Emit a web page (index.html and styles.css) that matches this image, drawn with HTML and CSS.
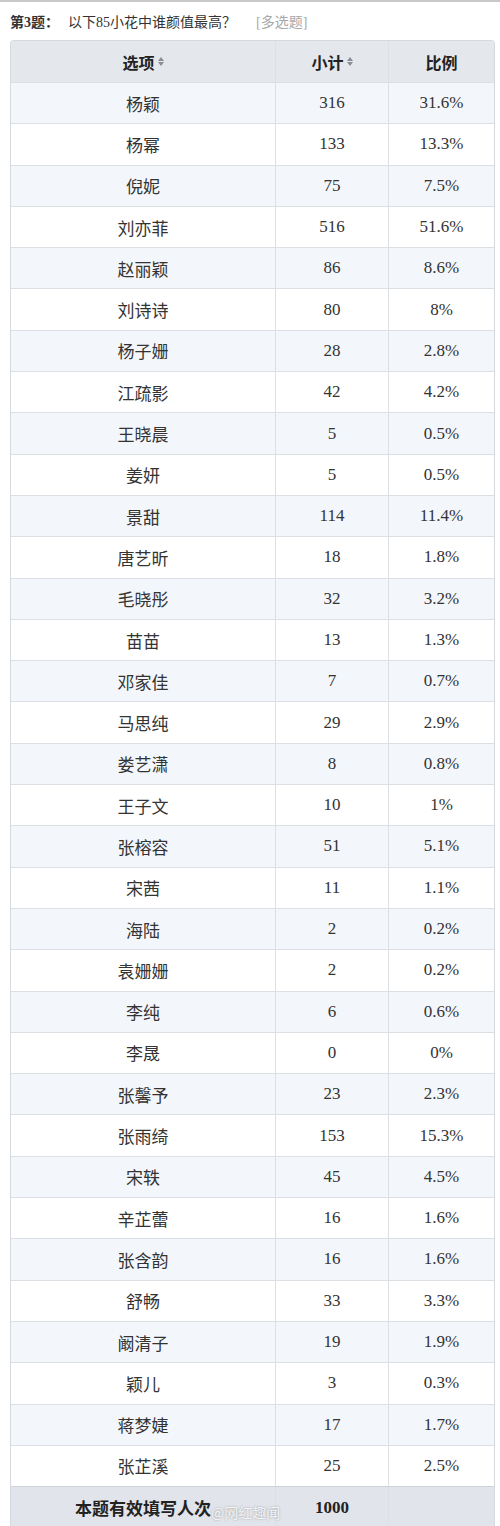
FILE: index.html
```html
<!DOCTYPE html>
<html lang="zh">
<head>
<meta charset="utf-8">
<link rel="stylesheet" href="styles.css">
</head>
<body>
<div class="topline"></div>
<div class="title"><span class="qno">第3题：</span><span class="qtext">以下85小花中谁颜值最高？</span><span class="qtype">[多选题]</span></div>
<div class="tbl">
  <div class="row head">
    <div class="c">选项<span class="sort"><i class="up"></i><i class="dn"></i></span></div>
    <div class="c">小计<span class="sort"><i class="up"></i><i class="dn"></i></span></div>
    <div class="c">比例</div>
  </div>
  <div class="row odd"><div class="c">杨颖</div><div class="c">316</div><div class="c">31.6%</div></div>
  <div class="row"><div class="c">杨幂</div><div class="c">133</div><div class="c">13.3%</div></div>
  <div class="row odd"><div class="c">倪妮</div><div class="c">75</div><div class="c">7.5%</div></div>
  <div class="row"><div class="c">刘亦菲</div><div class="c">516</div><div class="c">51.6%</div></div>
  <div class="row odd"><div class="c">赵丽颖</div><div class="c">86</div><div class="c">8.6%</div></div>
  <div class="row"><div class="c">刘诗诗</div><div class="c">80</div><div class="c">8%</div></div>
  <div class="row odd"><div class="c">杨子姗</div><div class="c">28</div><div class="c">2.8%</div></div>
  <div class="row"><div class="c">江疏影</div><div class="c">42</div><div class="c">4.2%</div></div>
  <div class="row odd"><div class="c">王晓晨</div><div class="c">5</div><div class="c">0.5%</div></div>
  <div class="row"><div class="c">姜妍</div><div class="c">5</div><div class="c">0.5%</div></div>
  <div class="row odd"><div class="c">景甜</div><div class="c">114</div><div class="c">11.4%</div></div>
  <div class="row"><div class="c">唐艺昕</div><div class="c">18</div><div class="c">1.8%</div></div>
  <div class="row odd"><div class="c">毛晓彤</div><div class="c">32</div><div class="c">3.2%</div></div>
  <div class="row"><div class="c">苗苗</div><div class="c">13</div><div class="c">1.3%</div></div>
  <div class="row odd"><div class="c">邓家佳</div><div class="c">7</div><div class="c">0.7%</div></div>
  <div class="row"><div class="c">马思纯</div><div class="c">29</div><div class="c">2.9%</div></div>
  <div class="row odd"><div class="c">娄艺潇</div><div class="c">8</div><div class="c">0.8%</div></div>
  <div class="row"><div class="c">王子文</div><div class="c">10</div><div class="c">1%</div></div>
  <div class="row odd"><div class="c">张榕容</div><div class="c">51</div><div class="c">5.1%</div></div>
  <div class="row"><div class="c">宋茜</div><div class="c">11</div><div class="c">1.1%</div></div>
  <div class="row odd"><div class="c">海陆</div><div class="c">2</div><div class="c">0.2%</div></div>
  <div class="row"><div class="c">袁姗姗</div><div class="c">2</div><div class="c">0.2%</div></div>
  <div class="row odd"><div class="c">李纯</div><div class="c">6</div><div class="c">0.6%</div></div>
  <div class="row"><div class="c">李晟</div><div class="c">0</div><div class="c">0%</div></div>
  <div class="row odd"><div class="c">张馨予</div><div class="c">23</div><div class="c">2.3%</div></div>
  <div class="row"><div class="c">张雨绮</div><div class="c">153</div><div class="c">15.3%</div></div>
  <div class="row odd"><div class="c">宋轶</div><div class="c">45</div><div class="c">4.5%</div></div>
  <div class="row"><div class="c">辛芷蕾</div><div class="c">16</div><div class="c">1.6%</div></div>
  <div class="row odd"><div class="c">张含韵</div><div class="c">16</div><div class="c">1.6%</div></div>
  <div class="row"><div class="c">舒畅</div><div class="c">33</div><div class="c">3.3%</div></div>
  <div class="row odd"><div class="c">阚清子</div><div class="c">19</div><div class="c">1.9%</div></div>
  <div class="row"><div class="c">颖儿</div><div class="c">3</div><div class="c">0.3%</div></div>
  <div class="row odd"><div class="c">蒋梦婕</div><div class="c">17</div><div class="c">1.7%</div></div>
  <div class="row"><div class="c">张芷溪</div><div class="c">25</div><div class="c">2.5%</div></div>
  <div class="row foot">
    <div class="c">本题有效填写人次</div>
    <div class="c">1000</div>
    <div class="c"></div>
  </div>
  <div class="wm">@网红趣闻</div>
</div>
</body>
</html>
```

FILE: styles.css
```css
html, body {
  margin: 0;
  padding: 0;
  background: #fff;
}
body {
  width: 500px;
  height: 1526px;
  overflow: hidden;
  font-family: "Liberation Serif", "Noto Sans CJK SC", serif;
  color: #333;
}
.topline {
  height: 2px;
  background: #c9c9c9;
}
.title {
  display: flex;
  align-items: center;
  height: 38px;
  padding-left: 10px;
  font-size: 14px;
  color: #333;
}
.qno {
  font-weight: bold;
  width: 58px;
}
.qtext {
  width: 188px;
}
.qtype {
  color: #a8a8a8;
}
.tbl {
  position: relative;
  margin-left: 10px;
  width: 483px;
  border: 1px solid #d6d9dd;
  border-bottom: none;
  border-radius: 4px 4px 0 0;
  overflow: hidden;
}
.row {
  display: grid;
  grid-template-columns: 264px 113px 1fr;
  height: 41.3px;
  border-top: 1px solid #dcdfe3;
  box-sizing: border-box;
  background: #fff;
}
.row.odd {
  background: #f3f7fb;
}
.row.head {
  border-top: none;
  height: 41px;
  background: #e4e7eb;
  font-weight: bold;
  font-family: "Noto Sans CJK SC", sans-serif;
  color: #222;
}
.row.foot {
  height: 42px;
  background: #e1e5eb;
  border-top: 1px solid #d0d4d9;
  font-weight: bold;
  color: #222;
}
.row.foot .c:first-child {
  font-family: "Noto Sans CJK SC", sans-serif;
  font-size: 17px;
}
.c {
  display: flex;
  align-items: center;
  justify-content: center;
  border-left: 1px solid #dcdfe3;
  font-size: 17px;
}
.c:first-child {
  border-left: none;
}
.head .c {
  font-size: 16px;
}
.sort {
  display: inline-flex;
  flex-direction: column;
  gap: 1px;
  margin-left: 3px;
}
.sort i {
  display: block;
  width: 0;
  height: 0;
  border-left: 3px solid transparent;
  border-right: 3px solid transparent;
}
.sort .up {
  border-bottom: 4px solid #8a8e93;
}
.sort .dn {
  border-top: 4px solid #8a8e93;
}
.wm {
  position: absolute;
  left: 200px;
  bottom: 6px;
  font-family: "Noto Sans CJK SC", sans-serif;
  font-size: 14px;
  color: rgba(255,255,255,0.85);
  text-shadow: 0 0 2px rgba(0,0,0,0.35);
}
```
